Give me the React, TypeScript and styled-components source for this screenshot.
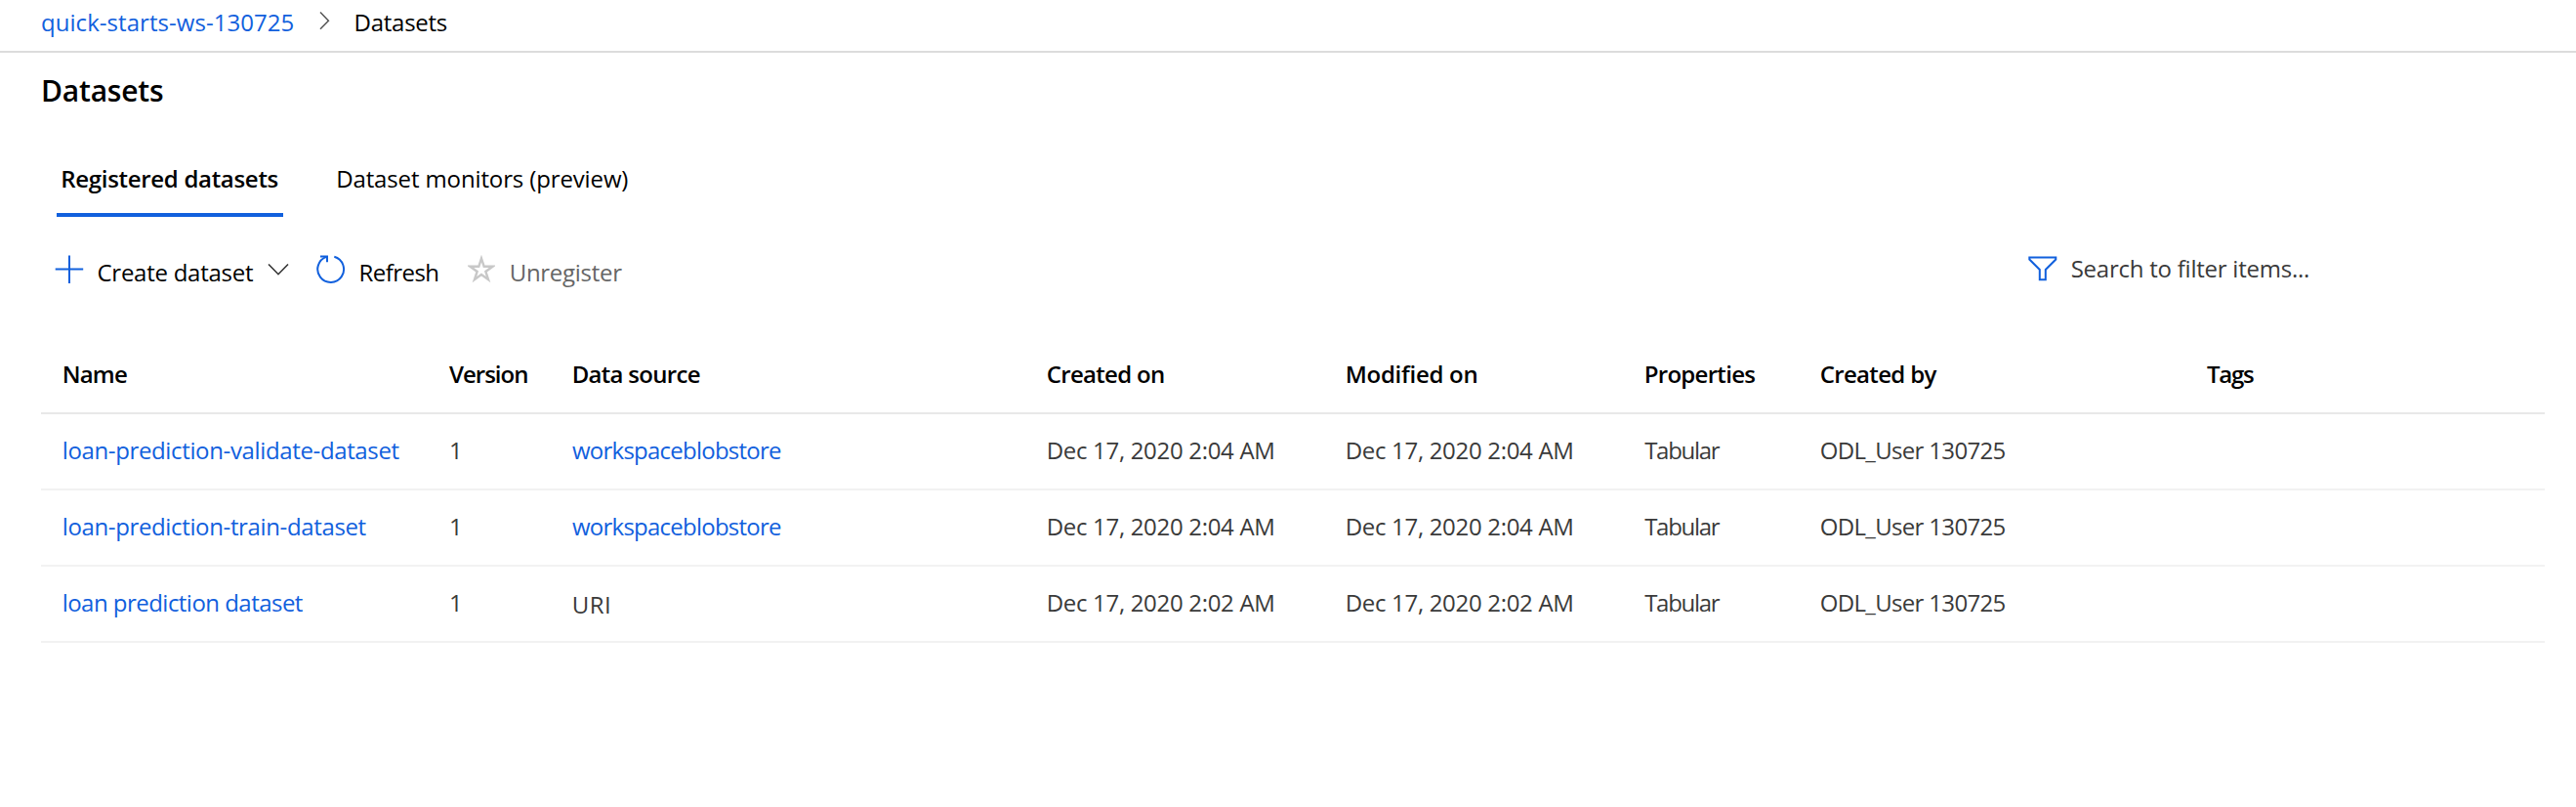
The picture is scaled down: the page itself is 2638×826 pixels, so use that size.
import React from 'react';
import styled, { createGlobalStyle } from 'styled-components';

const BLUE = '#1160dd';

const GlobalStyle = createGlobalStyle`
  * { box-sizing: border-box; }
  body {
    margin: 0;
    background: #fff;
    color: #000;
    font-family: 'Open Sans', 'Segoe UI', sans-serif;
    font-size: 24px;
    line-height: 32px;
  }
  svg { display: block; flex: none; }
`;

const Page = styled.div`
  min-height: 826px;
  background: #fff;
`;

const Text = styled.span<{ $track?: number }>`
  white-space: nowrap;
  letter-spacing: ${({ $track = 0 }) => $track}px;
`;

const Breadcrumb = styled.nav`
  display: flex;
  align-items: center;
  height: 54px;
  padding: 0 0 6px 42px;
  border-bottom: 2px solid #dcdcdc;
`;

const Crumb = styled(Text)`
  flex: 0 0 285px;
  color: ${BLUE};
`;

const Separator = styled.span`
  margin: 0 0 4px;
  flex: 0 0 35.5px;
`;

const Title = styled.h1`
  margin: 18.5px 0 0 42px;
  font-size: 30px;
  font-weight: 600;
  line-height: 40px;
  letter-spacing: -0.2px;
`;

const Tabs = styled.div`
  display: flex;
  gap: 50px;
  margin: 34.5px 0 0 58px;
`;

const Tab = styled.div<{ $active?: boolean }>`
  display: flex;
  align-items: center;
  height: 75px;
  width: ${({ $active }) => ($active ? '232px' : 'auto')};
  padding-left: 4.2px;
  border-bottom: 4px solid ${({ $active }) => ($active ? BLUE : 'transparent')};
  font-weight: ${({ $active }) => ($active ? 600 : 400)};
`;

const Toolbar = styled.div`
  display: flex;
  justify-content: space-between;
  height: 72px;
  margin-top: 18px;
  padding: 0 231px 0 56px;
`;

const Commands = styled.div`
  display: flex;
  align-items: center;
`;

const Command = styled.div<{ $width: number; $gap: number; $disabled?: boolean }>`
  display: flex;
  align-items: center;
  flex: 0 0 ${({ $width }) => $width}px;
  gap: ${({ $gap }) => $gap}px;
  color: ${({ $disabled }) => ($disabled ? '#666' : '#000')};
`;

const CommandLabel = styled(Text)`
  margin-top: 5px;
`;

const MenuMark = styled.span`
  margin: 0 0 1px 1px;
`;

const Search = styled.div`
  display: flex;
  align-items: center;
  gap: 13.7px;
  flex: 0 0 330px;
  padding-bottom: 3px;
  color: #3a3a3a;
`;

const Table = styled.div`
  margin: 32px 32px 0 42px;
`;

const Row = styled.div<{ $head?: boolean }>`
  display: grid;
  grid-template-columns: 396.3px 125.7px 486px 306px 306px 180px 396px 1fr;
  align-items: center;
  height: ${({ $head }) => ($head ? 80 : 78)}px;
  padding: 0 0 ${({ $head }) => ($head ? 0 : 3)}px 21.7px;
  border-bottom: 2px solid ${({ $head }) => ($head ? '#e8e8e8' : '#f2f2f2')};
  color: ${({ $head }) => ($head ? '#000' : '#3a3a3a')};
  font-weight: ${({ $head }) => ($head ? 600 : 400)};
`;

const Cell = styled(Text)<{ $link?: boolean; $inset?: number; $drop?: number }>`
  padding-left: ${({ $inset = 0 }) => $inset}px;
  padding-top: ${({ $drop = 0 }) => $drop}px;
  ${({ $link }) => $link && `color: ${BLUE};`}
`;

const PlusIcon = () => (
  <svg width="30" height="30" viewBox="0 0 30 30" fill="none" stroke={BLUE} strokeWidth="2">
    <path d="M15 0.4V29M0.7 14.5H29.2" />
  </svg>
);

const ChevronDown = () => (
  <svg width="22" height="14" viewBox="0 0 22 14" fill="none" stroke="#333" strokeWidth="1.6">
    <path d="M1 1.5L11 11.7L21 1.5" />
  </svg>
);

const ChevronRight = () => (
  <svg width="12" height="20" viewBox="0 0 12 20" fill="none" stroke="#555" strokeWidth="1.5">
    <path d="M1 1.6L9.4 10.2L1 18.8" />
  </svg>
);

const RefreshIcon = () => (
  <svg width="30" height="30" viewBox="0 0 30 30" fill="none" stroke={BLUE} strokeWidth="2">
    <path d="M18.3 1.7A13.4 13.4 0 1 1 10.4 1.9" />
    <path d="M4 1.4H11V7.2" />
  </svg>
);

const StarIcon = () => (
  <svg width="28" height="30" viewBox="-14 -15.5 28 30" fill="none" stroke="#c8c8c8" strokeWidth="2.4" strokeMiterlimit="8">
    <path d="M0 -12L2.69 -3.71L11.41 -3.71L4.36 1.42L7.05 9.71L0 4.58L-7.05 9.71L-4.36 1.42L-11.41 -3.71L-2.69 -3.71Z" />
  </svg>
);

const FilterIcon = () => (
  <svg width="30" height="26" viewBox="0 0 30 26" fill="none" stroke={BLUE} strokeWidth="2">
    <path d="M1.3 1.5H28.3V3.5L17.8 14V24.3H11.8V14L1.3 3.5Z" />
  </svg>
);

type Column = { label: string; track: number; inset?: number };

const columns: Column[] = [
  { label: 'Name', track: -0.77 },
  { label: 'Version', track: -1 },
  { label: 'Data source', track: -0.7 },
  { label: 'Created on', track: -0.68 },
  { label: 'Modified on', track: -0.26 },
  { label: 'Properties', track: -0.7 },
  { label: 'Created by', track: -0.66 },
  { label: 'Tags', track: -1.26, inset: 0.3 },
];

type Dataset = {
  name: string;
  nameTrack: number;
  source: string;
  linked: boolean;
  date: string;
};

const datasets: Dataset[] = [
  {
    name: 'loan-prediction-validate-dataset',
    nameTrack: -0.36,
    source: 'workspaceblobstore',
    linked: true,
    date: 'Dec 17, 2020 2:04 AM',
  },
  {
    name: 'loan-prediction-train-dataset',
    nameTrack: -0.36,
    source: 'workspaceblobstore',
    linked: true,
    date: 'Dec 17, 2020 2:04 AM',
  },
  {
    name: 'loan prediction dataset',
    nameTrack: -0.53,
    source: 'URI',
    linked: false,
    date: 'Dec 17, 2020 2:02 AM',
  },
];

export default function App() {
  return (
    <Page>
      <GlobalStyle />
      <Breadcrumb>
        <Crumb $track={0.05}>quick-starts-ws-130725</Crumb>
        <Separator>
          <ChevronRight />
        </Separator>
        <Text $track={-0.25}>Datasets</Text>
      </Breadcrumb>
      <Title>Datasets</Title>
      <Tabs>
        <Tab $active>
          <Text $track={-0.3}>Registered datasets</Text>
        </Tab>
        <Tab>
          <Text $track={-0.13}>Dataset monitors (preview)</Text>
        </Tab>
      </Tabs>
      <Toolbar>
        <Commands>
          <Command $width={268} $gap={13.5}>
            <PlusIcon />
            <CommandLabel $track={-0.26}>Create dataset</CommandLabel>
            <MenuMark>
              <ChevronDown />
            </MenuMark>
          </Command>
          <Command $width={155} $gap={13.5}>
            <RefreshIcon />
            <CommandLabel $track={-0.55}>Refresh</CommandLabel>
          </Command>
          <Command $width={160} $gap={14.7} $disabled>
            <StarIcon />
            <CommandLabel $track={-0.28}>Unregister</CommandLabel>
          </Command>
        </Commands>
        <Search>
          <FilterIcon />
          <Text $track={-0.24}>Search to filter items...</Text>
        </Search>
      </Toolbar>
      <Table>
        <Row $head>
          {columns.map((c) => (
            <Cell key={c.label} $track={c.track} $inset={c.inset}>
              {c.label}
            </Cell>
          ))}
        </Row>
        {datasets.map((d) => (
          <Row key={d.name}>
            <Cell $link $track={d.nameTrack}>{d.name}</Cell>
            <Cell>1</Cell>
            <Cell $link={d.linked} $track={d.linked ? -0.76 : 0.5} $inset={d.linked ? 0.3 : 0} $drop={d.linked ? 0 : 4}>
              {d.source}
            </Cell>
            <Cell $track={-0.31}>{d.date}</Cell>
            <Cell $track={-0.31}>{d.date}</Cell>
            <Cell $track={-1.3} $inset={0.5}>Tabular</Cell>
            <Cell $track={-0.66}>ODL_User 130725</Cell>
            <Cell />
          </Row>
        ))}
      </Table>
    </Page>
  );
}
